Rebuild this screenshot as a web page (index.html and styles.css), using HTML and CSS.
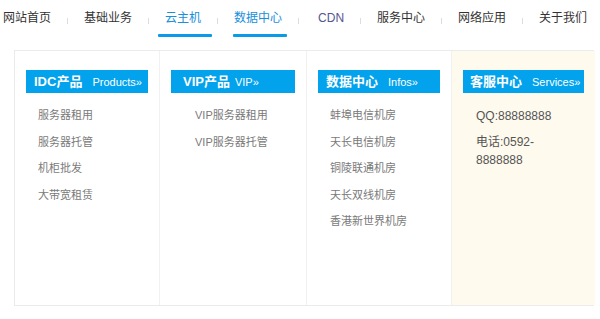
FILE: index.html
```html
<!DOCTYPE html>
<html lang="zh-CN">

<head>
    <meta charset="UTF-8">
    <title>数据中心</title>
    <link rel="stylesheet" href="styles.css">
</head>

<body>
    <ul class="nav">
        <li class="nav-item">网站首页</li>
        <li class="sep"></li>
        <li class="nav-item">基础业务</li>
        <li class="sep"></li>
        <li class="nav-item active">云主机</li>
        <li class="sep"></li>
        <li class="nav-item active">数据中心</li>
        <li class="sep"></li>
        <li class="nav-item cdn">CDN</li>
        <li class="sep"></li>
        <li class="nav-item">服务中心</li>
        <li class="sep"></li>
        <li class="nav-item">网络应用</li>
        <li class="sep"></li>
        <li class="nav-item">关于我们</li>
    </ul>

    <div class="panel">
        <div class="col">
            <h3 class="col-title">IDC产品<span>Products»</span></h3>
            <ul class="col-list">
                <li>服务器租用</li>
                <li>服务器托管</li>
                <li>机柜批发</li>
                <li>大带宽租赁</li>
            </ul>
        </div>
        <div class="col col-vip">
            <h3 class="col-title">VIP产品<span>VIP»</span></h3>
            <ul class="col-list">
                <li>VIP服务器租用</li>
                <li>VIP服务器托管</li>
            </ul>
        </div>
        <div class="col">
            <h3 class="col-title">数据中心<span>Infos»</span></h3>
            <ul class="col-list">
                <li>蚌埠电信机房</li>
                <li>天长电信机房</li>
                <li>铜陵联通机房</li>
                <li>天长双线机房</li>
                <li>香港新世界机房</li>
            </ul>
        </div>
        <div class="col col-service">
            <h3 class="col-title">客服中心<span>Services»</span></h3>
            <div class="contact">
                <p>QQ:88888888</p>
                <p>电话:0592-8888888</p>
            </div>
        </div>
    </div>
</body>

</html>
```

FILE: styles.css
```css
body {
    margin: 0;
    background-color: #fff;
    font-family: "Liberation Sans", "Noto Sans CJK SC", sans-serif;
}

ul {
    margin: 0;
    padding: 0;
    list-style: none;
}

.nav {
    display: flex;
    align-items: center;
    height: 37px;
    padding-left: 3px;
}

.nav-item {
    position: relative;
    flex-shrink: 0;
    height: 37px;
    line-height: 37px;
    padding: 0 16px;
    font-size: 12px;
    color: #333;
    white-space: nowrap;
}

.nav-item:first-child {
    padding-left: 0;
}

.nav-item:last-child {
    padding-right: 0;
}

.nav-item.active {
    color: #1a8fdb;
}

.nav-item.active::after {
    content: "";
    position: absolute;
    left: 50%;
    bottom: 0;
    width: 54px;
    height: 3px;
    margin-left: -25px;
    border-radius: 1px;
    background-color: #0a9be8;
}

.nav-item.cdn {
    padding: 0 16px 0 19px;
    color: #55558f;
}

.sep {
    flex-shrink: 0;
    width: 1px;
    height: 6px;
    margin-top: 5px;
    background-color: #ddd;
}

.panel {
    display: grid;
    grid-template-columns: 144px 147px 145px 1fr;
    width: 580px;
    height: 256px;
    box-sizing: border-box;
    margin: 13px 0 0 14px;
    border: 1px solid #ebebeb;
}

.col {
    padding: 19px 11px 0;
    border-left: 1px solid #f1f1f1;
}

.col:first-child {
    border-left: none;
    padding-left: 11px;
}

.col-title {
    margin: 0;
    height: 23px;
    line-height: 23px;
    padding-left: 8px;
    background-color: #02a2ec;
    color: #fff;
    font-size: 13px;
    font-weight: bold;
    white-space: nowrap;
}

.col-title span {
    margin-left: 10px;
    font-size: 11px;
    font-weight: normal;
}

.col-vip .col-title {
    padding-left: 12px;
}

.col-vip .col-title span {
    margin-left: 5px;
}

.col-service .col-title {
    padding-left: 7px;
}

.col-list {
    margin-top: 9px;
    padding-left: 12px;
}

.col-vip .col-list {
    padding-left: 24px;
}

.col-list li {
    line-height: 26.5px;
    font-size: 11px;
    color: #7a7a7a;
}

.col-service {
    background-color: #fefaee;
}

.contact {
    margin-top: 14px;
    padding: 0 13px;
    width: 95px;
}

.contact p {
    margin: 0 0 8px;
    line-height: 18px;
    font-size: 12px;
    color: #555;
}
```
